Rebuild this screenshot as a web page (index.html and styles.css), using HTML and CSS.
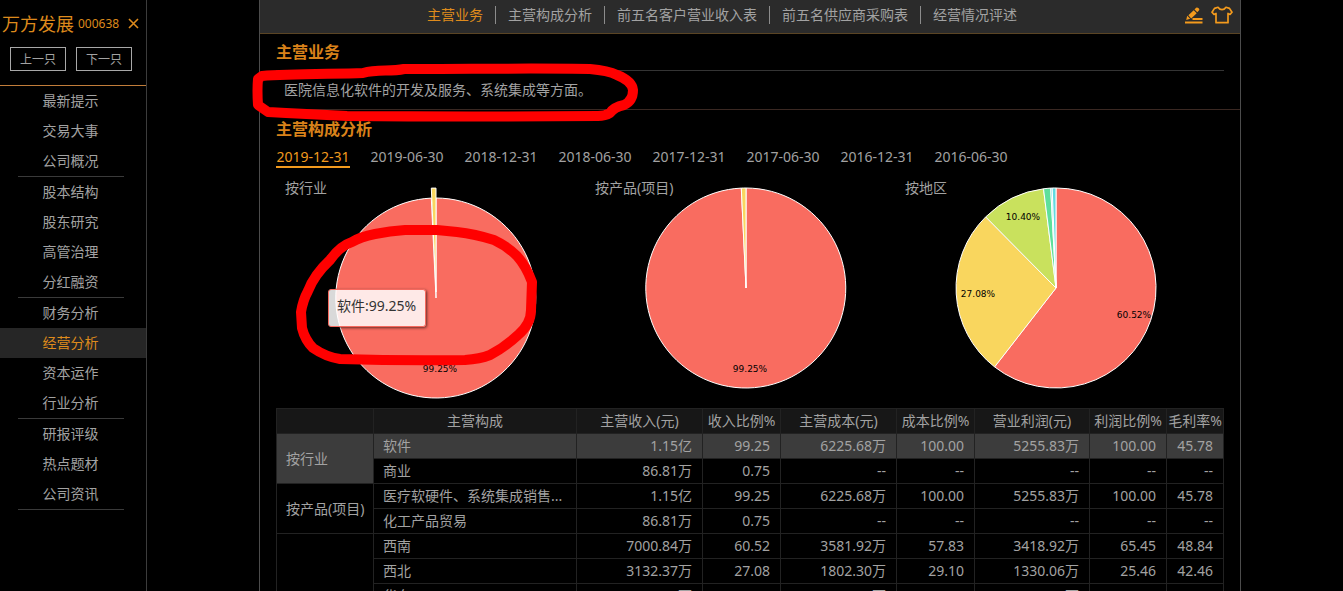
FILE: index.html
```html
<!DOCTYPE html>
<html lang="zh-CN">
<head>
<meta charset="utf-8">
<title>万方发展 000638 - 经营分析</title>
<link rel="stylesheet" href="styles.css">
</head>
<body>
<div class="app">
  <aside class="sidebar">
    <div class="stock">
      <span class="stock-name">万方发展</span>
      <span class="stock-code">000638</span>
      <button class="close" type="button" aria-label="关闭"><svg width="11" height="11" viewBox="0 0 11 11"><path d="M1 1l9 9M10 1l-9 9" fill="none" stroke="currentColor" stroke-width="1.6"/></svg></button>
    </div>
    <div class="switch">
      <button type="button">上一只</button>
      <button type="button">下一只</button>
    </div>
    <nav class="menu">
      <div class="group"><a href="#">最新提示</a><a href="#">交易大事</a><a href="#">公司概况</a></div>
      <div class="group"><a href="#">股本结构</a><a href="#">股东研究</a><a href="#">高管治理</a><a href="#">分红融资</a></div>
      <div class="group"><a href="#">财务分析</a><a href="#" class="current">经营分析</a><a href="#">资本运作</a><a href="#">行业分析</a></div>
      <div class="group"><a href="#">研报评级</a><a href="#">热点题材</a><a href="#">公司资讯</a></div>
    </nav>
  </aside>

  <main class="panel">
    <header class="topbar">
      <nav class="sections">
        <a href="#" class="current">主营业务</a><a href="#">主营构成分析</a><a href="#">前五名客户营业收入表</a><a href="#">前五名供应商采购表</a><a href="#">经营情况评述</a>
      </nav>
      <div class="tools">
        <button type="button" aria-label="编辑"><svg width="18" height="17" viewBox="0 0 18 17" fill="currentColor"><path d="M1.200 13l1-4.200 3 3zM3.400 8.200l5.300-5 3 3-5.500 5.200zM9.500 2.400l1.600-1.600q1-.9 2.200.2l.5.500q1 1 .1 2l-1.600 1.700z"/><path d="M7.500 11h10v2h-10zM0 14.500h17.500v2H0z"/></svg></button>
        <button type="button" aria-label="换肤"><svg width="22" height="18" viewBox="0 0 22 18"><path d="M7 1.300L3.500 2.400 1 6.200l2 2.200 2-1v9.300h12V7.400l2 1 2-2.200-2.500-3.800L15 1.300q-1.500 2.400-4 2.400T7 1.300z" fill="none" stroke="currentColor" stroke-width="1.700" stroke-linejoin="round"/></svg></button>
      </div>
    </header>

    <section class="business">
      <h2>主营业务</h2>
      <p>医院信息化软件的开发及服务、系统集成等方面。</p>
    </section>

    <section class="composition">
      <h2>主营构成分析</h2>
      <div class="dates">
        <button type="button" class="current">2019-12-31</button>
        <button type="button">2019-06-30</button>
        <button type="button">2018-12-31</button>
        <button type="button">2018-06-30</button>
        <button type="button">2017-12-31</button>
        <button type="button">2017-06-30</button>
        <button type="button">2016-12-31</button>
        <button type="button">2016-06-30</button>
      </div>

      <div class="charts">
        <figure>
          <figcaption>按行业</figcaption>
          <svg class="pie" width="310" height="240" viewBox="0 0 310 240">
            <path class="red" d="M155 130V30A100 100 0 1 1 150.300 30.100Z"/>
            <path class="yellow" d="M155 124L150.300 20.100H155Z"/>
            <text x="159" y="204">99.25%</text>
          </svg>
          <div class="tip">软件:99.25%</div>
        </figure>
        <figure>
          <figcaption>按产品(项目)</figcaption>
          <svg class="pie" width="310" height="240" viewBox="0 0 310 240">
            <path class="red" d="M155 120V20A100 100 0 1 1 150.300 20.100Z"/>
            <path class="yellow" d="M155 120L150.300 20.100A100 100 0 0 1 155 20Z"/>
            <text x="159" y="204">99.25%</text>
          </svg>
        </figure>
        <figure>
          <figcaption>按地区</figcaption>
          <svg class="pie" width="310" height="240" viewBox="0 0 310 240">
            <path class="red" d="M155 120V20A100 100 0 1 1 93.600 198.900Z"/>
            <path class="yellow" d="M155 120L93.600 198.900A100 100 0 0 1 84.700 48.900Z"/>
            <path class="lime" d="M155 120L84.700 48.900A100 100 0 0 1 142.500 20.800Z"/>
            <path class="green" d="M155 120L142.500 20.800A100 100 0 0 1 149.700 20.100Z"/>
            <path class="cyan" d="M155 120L149.700 20.100A100 100 0 0 1 151.200 20Z"/>
            <path class="cyan" d="M155 120L151.200 20A100 100 0 0 1 155 20Z"/>
            <text x="122" y="52">10.40%</text>
            <text x="77" y="129">27.08%</text>
            <text x="233" y="150">60.52%</text>
          </svg>
        </figure>
      </div>

      <table class="grid">
        <colgroup><col class="c-kind"><col class="c-name"><col class="c-income"><col class="c-rate"><col class="c-cost"><col class="c-rate"><col class="c-profit"><col class="c-share"><col class="c-margin"></colgroup>
        <thead>
          <tr><th></th><th>主营构成</th><th>主营收入(元)</th><th>收入比例%</th><th>主营成本(元)</th><th>成本比例%</th><th>营业利润(元)</th><th>利润比例%</th><th>毛利率%</th></tr>
        </thead>
        <tbody>
          <tr class="active"><th rowspan="2" class="active">按行业</th><td>软件</td><td>1.15亿</td><td>99.25</td><td>6225.68万</td><td>100.00</td><td>5255.83万</td><td>100.00</td><td>45.78</td></tr>
          <tr><td>商业</td><td>86.81万</td><td>0.75</td><td>--</td><td>--</td><td>--</td><td>--</td><td>--</td></tr>
          <tr><th rowspan="2">按产品(项目)</th><td>医疗软硬件、系统集成销售...</td><td>1.15亿</td><td>99.25</td><td>6225.68万</td><td>100.00</td><td>5255.83万</td><td>100.00</td><td>45.78</td></tr>
          <tr><td>化工产品贸易</td><td>86.81万</td><td>0.75</td><td>--</td><td>--</td><td>--</td><td>--</td><td>--</td></tr>
          <tr><th rowspan="3"></th><td>西南</td><td>7000.84万</td><td>60.52</td><td>3581.92万</td><td>57.83</td><td>3418.92万</td><td>65.45</td><td>48.84</td></tr>
          <tr><td>西北</td><td>3132.37万</td><td>27.08</td><td>1802.30万</td><td>29.10</td><td>1330.06万</td><td>25.46</td><td>42.46</td></tr>
          <tr><td>华东</td><td>1203.05万</td><td>10.40</td><td>734.20万</td><td>11.85</td><td>468.85万</td><td>8.98</td><td>38.97</td></tr>
        </tbody>
      </table>
    </section>

    <svg class="marks" width="400" height="370" viewBox="250 0 400 370" aria-hidden="true">
      <path d="M262 76C290 74 335 74 363 73C378 69 390 72 404 69C470 69 540 68 590 69C602 70 609 71 617 75Q632 81 633 90Q633 101 624 105Q614 107 610 113Q605 116 598 116Q470 117 347 116L286 113L268 112L258 105Q257 90 258 79Z"/>
      <path d="M437 230L405 230Q390 231 375 234Q360 237 352 242Q340 246 330 260Q314 275 308 291Q303 300 301 312L302 328Q305 340 313 348Q326 357 340 359Q405 361 465 360Q480 359 490 355Q505 347 518 335Q531 324 531 310L532 282Q526 266 517 256Q507 246 494 240Q475 234 457 232Z"/>
    </svg>
  </main>
</div>
</body>
</html>
```

FILE: styles.css
```css
* { box-sizing: border-box; }

body {
  margin: 0;
  background: #000;
  color: #a2a2a2;
  font: 14px/18px "Noto Sans", "Noto Sans CJK SC", sans-serif;
}

a { color: inherit; text-decoration: none; }

button {
  padding: 0;
  border: 0;
  background: none;
  color: inherit;
  font: inherit;
  cursor: pointer;
}

button svg { display: block; }

.app {
  display: flex;
  height: 100vh;
  overflow: hidden;
}

/* Sidebar */
.sidebar {
  flex: none;
  width: 147px;
  border-right: 1px solid #3c3c3c;
}

.stock {
  display: flex;
  align-items: center;
  padding: 0 2px;
  height: 47px;
  color: #dd8a1c;
}

.stock-name { font-size: 18px; }
.stock-code { margin-left: 4px; font-size: 12px; }
.close { margin-left: 9px; }

.switch {
  display: flex;
  gap: 10px;
  padding: 0 10px 14px;
  border-bottom: 1px solid #c17d3a;
}

.switch button {
  flex: none;
  width: 56px;
  height: 24px;
  padding-top: 1px;
  border: 1px solid #a8a8a8;
  font-size: 12px;
}

.group::after {
  content: "";
  display: block;
  height: 1px;
  margin: 0 22px 0 18px;
  background: #3a3a3a;
}

.menu a {
  display: block;
  padding: 6px 5px 6px 0;
  text-align: center;
}

.menu .current {
  background: #262626;
  color: #df8b1c;
}

/* Main panel */
.panel {
  position: relative;
  flex: 1;
  min-width: 0;
  margin: 0 102px 0 112px;
  border: solid #4c4c4c;
  border-width: 0 1px;
}

.topbar {
  display: flex;
  align-items: center;
  height: 34px;
  padding-bottom: 3px;
  background: #2b2b2b;
  border-bottom: 1px solid #5a4424;
}

.sections {
  flex: 1;
  display: flex;
  justify-content: center;
}

.sections a { padding: 0 12px; white-space: nowrap; }
.sections a + a { border-left: 1px solid #8c8c8c; }
.sections .current { color: #df8b1c; }

.tools {
  display: flex;
  gap: 8px;
  padding: 0 7px 0 1px;
  color: #f39a1d;
}

h2 {
  margin: 0;
  color: #d9821a;
  font-size: 16px;
  line-height: 36px;
}

.business {
  padding: 0 16px;
  border-bottom: 1px solid #3a2822;
}

.business p {
  margin: 0;
  padding: 10px 8px;
  border-top: 1px solid #343434;
}

.composition { padding: 1px 16px 0; }

.dates {
  display: flex;
  gap: 20px;
  padding-top: 1px;
}

.dates button {
  width: 74px;
  border-bottom: 2px solid transparent;
  white-space: nowrap;
}

.dates .current { border-color: #f29a1e; color: #f29a1e; }

/* Charts */
.charts {
  display: grid;
  grid-template-columns: repeat(3, 1fr);
  padding: 0 13px 0 5px;
}

figure {
  position: relative;
  display: grid;
  margin: 0;
}

figcaption, .pie { grid-area: 1 / 1; }
figcaption { padding: 11px 4px; }
.pie { justify-self: center; }

.pie path { stroke: #fff; stroke-width: 1; stroke-linejoin: bevel; }
.pie text {
  fill: #000;
  font: 9px "DejaVu Sans", sans-serif;
  text-anchor: middle;
}

.red { fill: #f96c60; }
.yellow { fill: #f9d65e; }
.lime { fill: #c9e15d; }
.green { fill: #5fdf9b; }
.cyan { fill: #62dbe0; }

.tip {
  position: absolute;
  left: 47px;
  top: 121px;
  padding: 7px 9px 11px 8px;
  border: 1px solid #f5695e;
  border-radius: 3px;
  background: rgba(255, 255, 255, 0.85);
  box-shadow: 1px 1px 3px rgba(0, 0, 0, 0.6);
  color: #333;
  white-space: nowrap;
}

/* Table */
.grid {
  width: 100%;
  table-layout: fixed;
  border-collapse: collapse;
}

.c-kind { width: 97px; }
.c-income { width: 126px; }
.c-rate { width: 78px; }
.c-cost { width: 116px; }
.c-profit { width: 115px; }
.c-share { width: 77px; }
.c-margin { width: 57px; }

.grid th, .grid td {
  height: 25px;
  padding: 0 10px;
  border: 1px solid #222;
  font-weight: normal;
  text-align: right;
  white-space: nowrap;
}

.grid thead th {
  padding: 0;
  background: #171717;
  text-align: center;
}

.grid tbody th {
  padding-right: 0;
  padding-left: 9px;
  text-align: left;
}

.grid td:nth-of-type(1) {
  padding-right: 0;
  padding-left: 9px;
  text-align: left;
}

.grid tr.active td, .grid th.active { background: #3c3c3c; }

/* Hand-drawn highlights over the page */
.marks {
  position: absolute;
  left: -10px;
  top: 0;
  pointer-events: none;
}

.marks path {
  fill: none;
  stroke: #f00;
  stroke-width: 10;
  stroke-linejoin: round;
}
```
